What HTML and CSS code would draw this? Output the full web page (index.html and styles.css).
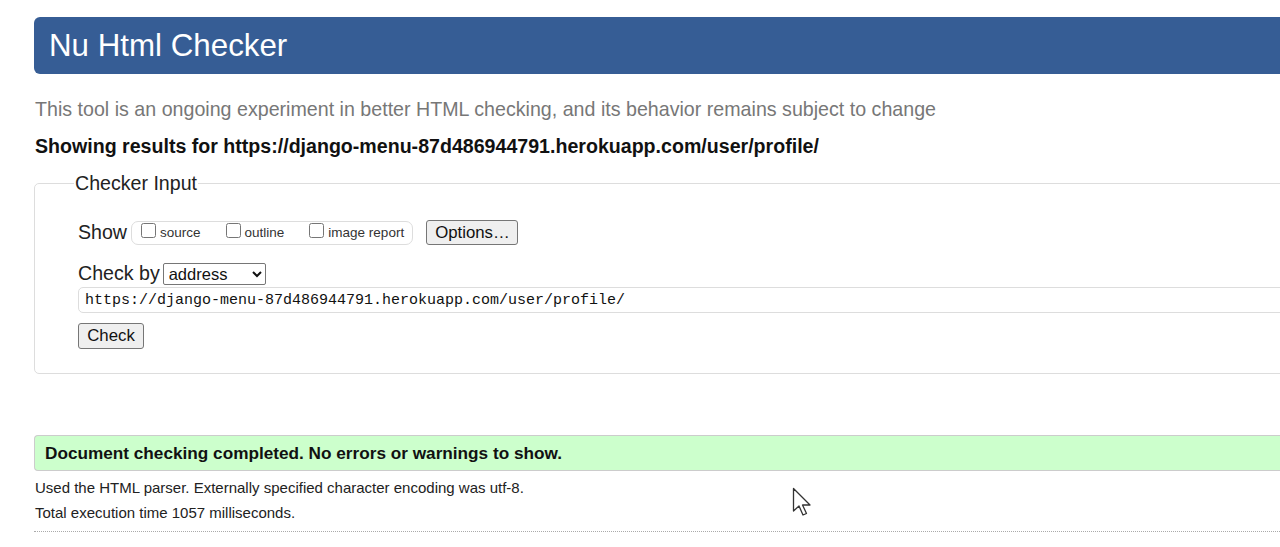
FILE: index.html
```html
<!DOCTYPE html>
<html>
<head>
<meta charset="utf-8">
<title>Nu Html Checker</title>
<link rel="stylesheet" href="styles.css">
</head>
<body>
<div class="page">
  <h1 class="banner">Nu Html Checker</h1>
  <p class="intro">This tool is an ongoing experiment in better HTML checking, and its behavior remains subject to change</p>
  <p class="showing">Showing results for https://django-menu-87d486944791.herokuapp.com/user/profile/</p>
  <fieldset class="checker">
    <legend>Checker Input</legend>
    <div class="row show-row">
      <span class="label">Show</span>
      <span class="opts">
        <label><input type="checkbox"> source</label>
        <label><input type="checkbox"> outline</label>
        <label><input type="checkbox"> image report</label>
      </span>
      <button class="btn options">Options…</button>
    </div>
    <div class="row by-row">
      <span class="label">Check by</span>
      <select class="sel"><option>address</option></select>
    </div>
    <input class="url" type="text" value="https://django-menu-87d486944791.herokuapp.com/user/profile/">
    <button class="btn check">Check</button>
  </fieldset>
  <p class="success">Document checking completed. No errors or warnings to show.</p>
  <p class="meta">Used the HTML parser. Externally specified character encoding was utf-8.</p>
  <p class="meta">Total execution time 1057 milliseconds.</p>
  <div class="rule"></div>
</div>
<svg class="cursor" width="22" height="32" viewBox="0 0 22 32"><path d="M1.5 1.5 L1.5 24 L7 19 L11 28 L14.5 26.5 L10.5 18 L18 18 Z" fill="#fff" stroke="#333" stroke-width="1.3" stroke-linejoin="round"/></svg>
</body>
</html>
```
FILE: styles.css
```css
html, body { margin: 0; padding: 0; background: #fff; overflow: hidden; }
body { font-family: "Liberation Sans", Arial, sans-serif; color: #222; position: relative; height: 547px; }
.page { padding: 17px 0 0 34px; width: 1400px; }
.banner {
  margin: 0; height: 57px; box-sizing: border-box;
  background: #365d95; color: #fff; font-weight: normal;
  font-size: 31.3px; line-height: 57px; padding-left: 15px;
  border-radius: 6px 0 0 6px;
}
.intro { margin: 22px 0 0 1px; font-size: 19.65px; line-height: 26px; color: #777; }
.showing { margin: 11px 0 0 1px; font-size: 19.6px; line-height: 26px; font-weight: bold; color: #111; }
.checker {
  margin: 13px 0 0 0; padding: 20px 0 24px 43px;
  border: 1px solid #ddd; border-radius: 5px; min-width: 0;
}
.checker legend { font-size: 19.6px; padding: 0 1px; margin-left: -4px; color: #222; }
.row { display: flex; align-items: center; }
.label { font-size: 19.6px; color: #222; }
.show-row { margin-top: 5px; }
.opts {
  display: flex; align-items: center;
  margin-left: 4px; height: 22px; border: 1px solid #ddd; border-radius: 7px;
  padding: 0 8px 0 9px; font-size: 13.5px; color: #333;
}
.opts label { display: flex; align-items: center; white-space: nowrap; }
.opts input { margin: 0 4px 0 0; width: 15px; height: 15px; position: relative; top: -2px; }
.opts label + label { margin-left: 25px; }
.btn {
  font-family: "Liberation Sans", Arial, sans-serif; font-size: 16.8px; color: #111;
  background: #efefef; border: 1px solid #767676; border-radius: 3px; padding: 0 8px;
}
.options { margin-left: 13px; height: 25px; width: 92px; }
.by-row { margin-top: 17px; }
.sel {
  margin-left: 3px; height: 22px; width: 103px; font-size: 16.5px;
  font-family: "Liberation Sans", Arial, sans-serif; border: 1px solid #767676; border-radius: 2px;
  background: #fff; color: #111; padding: 0 1px;
}
.url {
  display: block; margin-top: 2px; width: 1300px; height: 26px; box-sizing: border-box;
  border: 1px solid #ddd; border-radius: 5px; padding: 0 6px;
  font-family: "Liberation Mono", "DejaVu Sans Mono", monospace; font-size: 15px; color: #111;
}
.check { display: block; margin-top: 10px; height: 26px; width: 66px; padding: 0; }
.success {
  margin: 61px 0 0 0; height: 36px; box-sizing: border-box;
  background: #ccffcc; border: 1px solid #ccc; border-right: 0; border-radius: 4px 0 0 4px;
  font-size: 17.2px; font-weight: bold; line-height: 34px; padding-left: 10px; color: #111;
}
.meta { margin: 0 0 0 1px; font-size: 15px; line-height: 25px; color: #222; }
.success + .meta { margin-top: 4px; }
.rule { margin-top: 6px; border-top: 1px dotted #aaa; }
.cursor { position: absolute; left: 792px; top: 487px; }
```
